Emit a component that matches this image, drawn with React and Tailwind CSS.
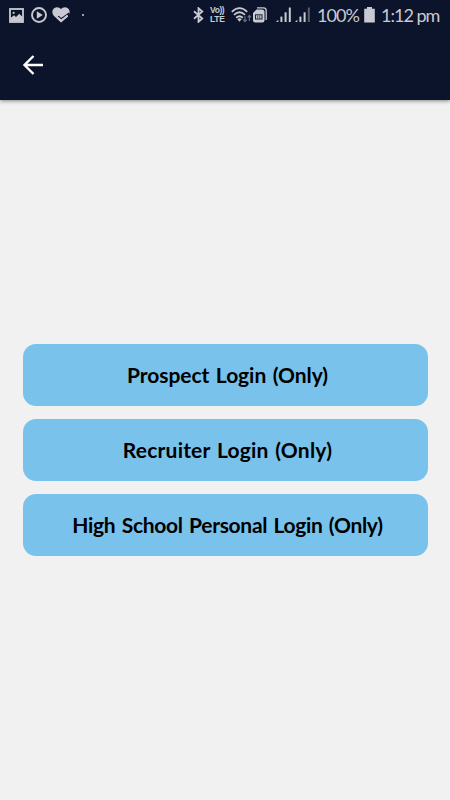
import clsx from "clsx";

const logins = [
  { label: "Prospect Login (Only)", spacing: "tracking-[-0.05px]" },
  { label: "Recruiter Login (Only)", spacing: "tracking-[0.2px]" },
  { label: "High School Personal Login (Only)", spacing: "tracking-[-0.3px]" },
];

const ImageIcon = () => (
  <svg className="h-[15px] w-[15px]" viewBox="0 0 15 15" fill="none" stroke="currentColor">
    <rect x="1" y="1" width="13" height="13" strokeWidth="1.8" />
    <path d="M1.5 13.5V10L5 7.3L7 9L10.3 5.8L13.5 9V13.5Z" fill="currentColor" stroke="none" />
    <circle cx="4.6" cy="4.8" r="1.1" fill="currentColor" stroke="none" />
  </svg>
);

const PlayIcon = () => (
  <svg className="ml-[7px] h-4 w-4" viewBox="0 0 16 16" fill="none" stroke="currentColor">
    <circle cx="8" cy="8" r="7" strokeWidth="1.9" />
    <path d="M5.8 4.2L11.8 8L5.8 11.8Z" fill="currentColor" stroke="none" />
  </svg>
);

const HealthIcon = () => (
  <svg className="ml-[5px] h-4 w-[18px]" viewBox="0 0 18 16" fill="none">
    <path
      d="M9 15.5L2 9C-0.5 6.5 0 2.5 2.5 1C5 -0.3 7.5 0.5 9 2.2C10.5 0.5 13 -0.3 15.5 1C18 2.5 18.5 6.5 16 9Z"
      fill="currentColor"
    />
    <path d="M6.2 9.3L9.2 11.8L16.5 6.5V14H13" stroke="#0b142b" strokeWidth="1.4" />
    <path d="M6 10.8L9.2 13.8L15.6 8.6" stroke="currentColor" strokeWidth="2" />
  </svg>
);

const BluetoothIcon = () => (
  <svg className="h-4 w-[11px]" viewBox="0 0 11 16" fill="none" stroke="currentColor" strokeWidth="1.8">
    <path d="M1 4.3L9.3 11.5L5.5 14.8V1.2L9.3 4.5L1 11.7" />
  </svg>
);

const WifiIcon = () => (
  <svg className="ml-[5px] h-4 w-[21px]" viewBox="0 0 21 16" fill="none" stroke="currentColor">
    <path d="M0.8 4.8Q8.5 -2.6 16.2 4.8M3 7.8Q8.5 2.6 14 7.8M5.2 10.7Q8.5 7.8 11.8 10.7" strokeWidth="1.8" />
    <path d="M6.2 12Q8.5 10.3 10.8 12L8.5 14.8Z" fill="currentColor" stroke="none" />
    <g className="text-[#666d80]" stroke="currentColor" strokeWidth="1.2">
      <path d="M14 9.2V14.5M12.2 12.7L14 14.7L15.8 12.7" />
      <path d="M18.4 14V8.5M16.7 10.4L18.4 8.5L20.1 10.4" />
    </g>
  </svg>
);

const SimIcon = () => (
  <svg className="ml-px h-4 w-[14px]" viewBox="0 0 14 16" fill="none">
    <path d="M4 0.8H10.5Q13.2 0.8 13.2 3.5V13" stroke="currentColor" strokeWidth="1.3" />
    <path d="M3.5 2.4H9Q11.5 2.4 11.5 4.9V13.3Q11.5 15.5 9.3 15.5H2.2Q0 15.5 0 13.3V6Z" fill="currentColor" />
    <rect x="2.5" y="7.8" width="6.5" height="4.2" stroke="#172039" strokeWidth="1" />
    <path d="M4.7 8.5V11.5M6.7 8.5V11.5" stroke="#172039" strokeWidth="0.7" />
  </svg>
);

const SignalIcon = ({ className, weak }) => (
  <svg className={clsx("h-4 w-4", className)} viewBox="0 0 16 16" fill="currentColor">
    <path d="M0 15L2.3 12.7V15Z" />
    <rect x="4.4" y="9.6" width="2" height="5.4" />
    <rect x="8.6" y="5.3" width="2" height="9.7" />
    <rect x="12.8" y="0.5" width="2" height="14.5" opacity={weak ? 0.4 : 1} />
  </svg>
);

const BatteryIcon = () => (
  <svg className="h-4 w-[11px]" viewBox="0 0 11 16" fill="currentColor">
    <path d="M3 0H8V1.8H10.8V15.5H0.2V1.8H3Z" />
  </svg>
);

const StatusBar = () => {
  return (
    <div className="flex h-[30px] items-center justify-between pr-[11px] pl-[9px] text-[#c9cad1]">
      <div className="flex items-center">
        <ImageIcon />
        <PlayIcon />
        <HealthIcon />
        <span className="ml-3 h-[2px] w-[2px] rounded-full bg-current" />
      </div>

      <div className="flex items-center">
        <BluetoothIcon />
        <div className="ml-[6px] w-[16px] font-['Liberation_Sans',sans-serif] text-[8.5px] leading-[9px] font-bold whitespace-nowrap">
          <div className="h-[9px] tracking-[-0.4px]">Vo))</div>
          <div className="h-[9px] tracking-[-0.3px]">LTE</div>
        </div>
        <WifiIcon />
        <SimIcon />
        <SignalIcon className="ml-[9px]" />
        <SignalIcon className="ml-[3px]" weak />
        <span className="ml-[6px] w-[42px] text-[18px] leading-5 tracking-[-0.9px] whitespace-nowrap">100%</span>
        <span className="ml-[5px] flex">
          <BatteryIcon />
        </span>
        <span className="ml-[6px] w-[58px] text-[18px] leading-5 tracking-[-1px] whitespace-nowrap">1:12 pm</span>
      </div>
    </div>
  );
};

const App = () => {
  return (
    <div className="flex h-screen w-full flex-col bg-[#f1f1f1] font-['Lato','Liberation_Sans',sans-serif]">
      {/* Header */}
      <header className="z-10 h-[100px] shrink-0 bg-[#0b142b] shadow-[0_1px_4px_rgba(0,0,0,0.45)]">
        <StatusBar />
        <div className="flex h-[70px] items-center pl-[22px]">
          <button aria-label="Back" className="text-white">
            <svg className="h-[22px] w-[22px]" viewBox="0 0 22 22" fill="none" stroke="currentColor" strokeWidth="2.4">
              <path d="M21 11H2.7M11.5 2L2.5 11L11.5 20" />
            </svg>
          </button>
        </div>
      </header>

      {/* Login options */}
      <main className="flex flex-1 flex-col justify-center gap-[12.5px] pr-[22.5px] pl-[22.5px]">
        {logins.map(({ label, spacing }) => (
          <button
            key={label}
            className={clsx(
              "h-[62.5px] rounded-[13px] bg-[#79c2eb] pl-[5px] text-[21px] font-bold [word-spacing:1.5px] whitespace-nowrap text-black",
              spacing
            )}
          >
            {label}
          </button>
        ))}
      </main>
    </div>
  );
};

export default App;
